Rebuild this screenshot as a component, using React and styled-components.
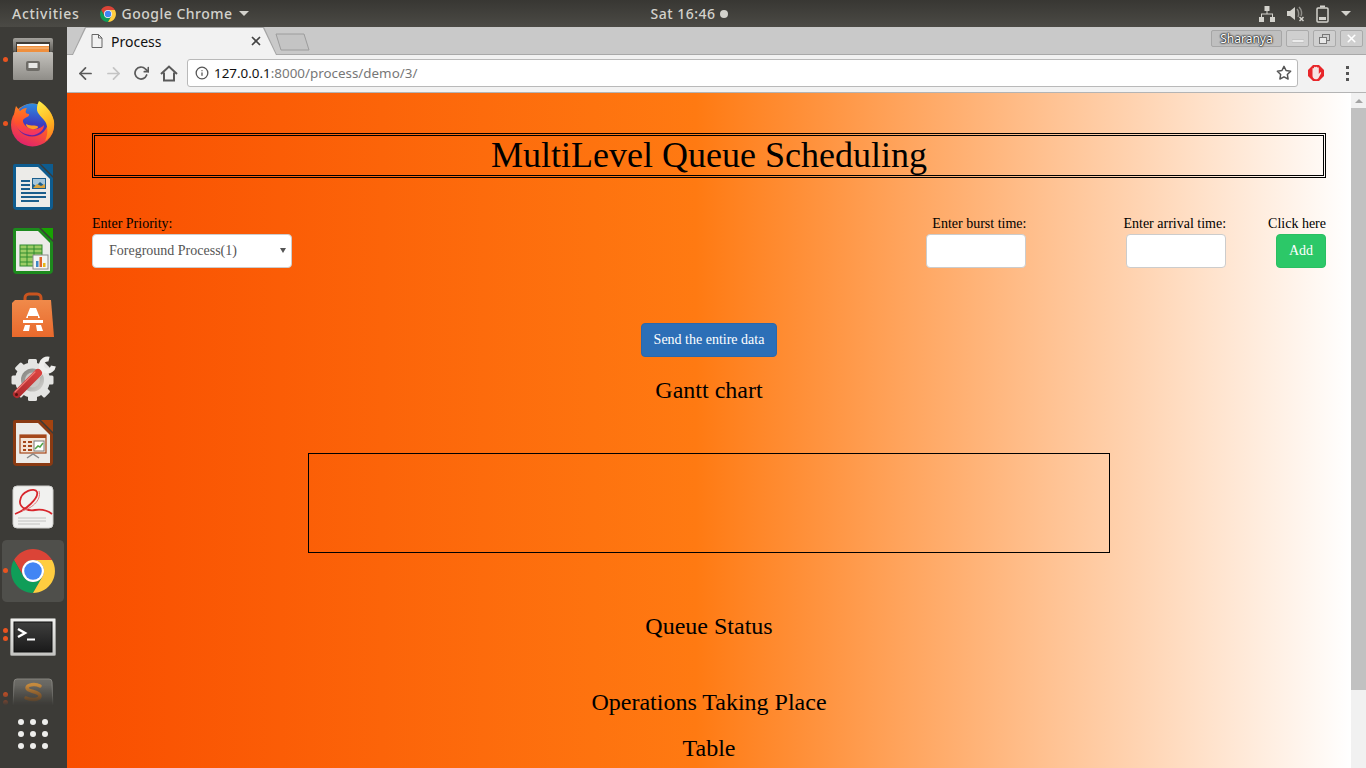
import React from "react";
import styled, { createGlobalStyle } from "styled-components";
import { FiArrowLeft, FiArrowRight, FiRotateCw, FiInfo, FiStar, FiX } from "react-icons/fi";

const GlobalStyle = createGlobalStyle`
  html, body { margin: 0; padding: 0; height: 100%; overflow: hidden; }
  * { box-sizing: border-box; }
`;

const Screen = styled.div`
  width: 1366px;
  height: 768px;
  display: flex;
  flex-direction: column;
  overflow: hidden;
  font-family: "Liberation Serif", serif;
`;

const TopBar = styled.div`
  height: 27px;
  flex: none;
  display: grid;
  grid-template-columns: 1fr auto 1fr;
  align-items: center;
  background: linear-gradient(#383733, #4b4a45);
  color: #d3d2cc;
  font-family: "Noto Sans", sans-serif;
  font-size: 14px;
  font-weight: 500;
  letter-spacing: 0.5px;
`;

const TopLeft = styled.div`
  display: flex;
  align-items: center;
  padding-left: 12px;
`;

const Activities = styled.span`
  letter-spacing: 0.72px;
`;

const AppMenu = styled.div`
  display: flex;
  align-items: center;
  gap: 6px;
  margin-left: 20px;
`;

const Caret = styled.span`
  width: 0;
  height: 0;
  border-left: 5px solid transparent;
  border-right: 5px solid transparent;
  border-top: 5px solid #d3d2cc;
`;

const Clock = styled.div`
  display: flex;
  align-items: center;
  gap: 4px;
  margin-left: 12px;
`;

const ClockDot = styled.span`
  width: 8px;
  height: 8px;
  border-radius: 50%;
  background: #d3d2cc;
`;

const Tray = styled.div`
  display: flex;
  align-items: center;
  justify-content: flex-end;
  gap: 12px;
  padding-right: 15px;
`;

const Body = styled.div`
  flex: 1;
  display: flex;
  min-height: 0;
`;

const Dock = styled.div`
  width: 67px;
  flex: none;
  display: flex;
  flex-direction: column;
  align-items: flex-start;
  padding-left: 2px;
  background: #3c3b37;
`;

const DockItem = styled.div`
  position: relative;
  width: 62px;
  height: 64px;
  flex: none;
  display: flex;
  align-items: center;
  justify-content: center;
  border-top: 1px solid transparent;
  border-bottom: 1px solid transparent;
  background-clip: padding-box;
  border-radius: 5px;
  background-color: ${(p) => (p.$active ? "rgba(255,255,255,0.1)" : "transparent")};
`;

const FadedItem = styled.div`
  position: relative;
  width: 62px;
  height: 42px;
  flex: none;
  display: flex;
  justify-content: center;
  padding-top: 11px;
  overflow: hidden;
  -webkit-mask-image: linear-gradient(#000 45%, rgba(0, 0, 0, 0.55) 70%, transparent 92%);
  mask-image: linear-gradient(#000 45%, rgba(0, 0, 0, 0.55) 70%, transparent 92%);
`;

const RunDot = styled.span`
  position: absolute;
  left: 1px;
  top: ${(p) => p.$top}px;
  width: 5px;
  height: 5px;
  border-radius: 50%;
  background: #e95420;
`;

const AppGrid = styled.div`
  display: grid;
  grid-template-columns: repeat(3, 6px);
  gap: 6px;
  margin: 10px 0 0 16px;
`;

const GridDot = styled.span`
  width: 6px;
  height: 6px;
  border-radius: 50%;
  background: #eeeeec;
`;

const Browser = styled.div`
  flex: 1;
  min-width: 0;
  display: flex;
  flex-direction: column;
`;

const TabStrip = styled.div`
  height: 28px;
  flex: none;
  display: flex;
  align-items: flex-end;
  padding-left: 5px;
  background: #c9c9c9;
  border-bottom: 1px solid #a9a9a9;
`;

const Tab = styled.div`
  position: relative;
  width: 205px;
  height: 28px;
  margin-bottom: -1px;
  background: #a4a4a4;
  clip-path: polygon(0 100%, 13px 0, calc(100% - 13px) 0, 100% 100%);
  &::before {
    content: "";
    position: absolute;
    inset: 1px 1px 0 1px;
    background: #f2f2f2;
    clip-path: polygon(0 100%, 13px 0, calc(100% - 13px) 0, 100% 100%);
  }
`;

const TabInner = styled.div`
  position: relative;
  height: 100%;
  display: flex;
  align-items: center;
  padding: 0 14px 0 19px;
  color: #111;
  font-family: "Noto Sans", sans-serif;
  font-size: 14px;
`;

const TabTitle = styled.span`
  flex: 1;
  margin-left: 8px;
`;

const NewTab = styled.svg`
  margin: 0 0 3px -2px;
  flex: none;
`;

const WindowControls = styled.div`
  margin-left: auto;
  align-self: flex-start;
  display: flex;
  align-items: center;
  gap: 4px;
  padding: 3px 3px 0 0;
`;

const ProfileChip = styled.div`
  width: 71px;
  height: 17px;
  display: flex;
  align-items: center;
  justify-content: center;
  border: 1px solid #a6a6a6;
  border-radius: 2px;
  background: #bfbfbf;
  color: #fff;
  font-family: "Noto Sans", sans-serif;
  font-size: 12px;
  text-shadow: 0 0 1px #111, 0 0 2px #111, 0 0 2px #111;
`;

const WinButton = styled.div`
  width: 23px;
  height: 17px;
  display: flex;
  align-items: center;
  justify-content: center;
  border: 1px solid #aaa;
  border-radius: 2px;
  background: #cfcfcf;
`;

const Toolbar = styled.div`
  height: 38px;
  flex: none;
  display: flex;
  align-items: center;
  padding: 0 0 1px 4px;
  background: #f2f2f2;
  border-bottom: 1px solid #b4b4b4;
  color: #555;
`;

const NavIcon = styled.div`
  width: 28px;
  height: 28px;
  flex: none;
  display: flex;
  align-items: center;
  justify-content: center;
  color: ${(p) => (p.$muted ? "#c4c4c4" : "#5a5a5a")};
`;

const Omnibox = styled.div`
  width: 1111px;
  height: 28px;
  margin-left: 4px;
  flex: none;
  display: flex;
  align-items: center;
  padding: 0 5px 0 7px;
  background: #fff;
  border: 1px solid #b9b9b9;
  border-radius: 3px;
  font-family: "Noto Sans", sans-serif;
  font-size: 13.4px;
  color: #777;
`;

const UrlHost = styled.span`
  color: #111;
  margin-left: 5px;
`;

const UrlRest = styled.span`
  flex: 1;
`;

const ExtButton = styled.div`
  width: 24px;
  height: 24px;
  margin-left: 6px;
  display: flex;
  align-items: center;
  justify-content: center;
`;

const MenuDots = styled.div`
  margin-left: 18px;
  display: flex;
  flex-direction: column;
  gap: 3px;
`;

const MenuDot = styled.span`
  width: 3px;
  height: 3px;
  background: #555;
`;

const Viewport = styled.div`
  flex: 1;
  min-height: 0;
  display: flex;
`;

const Page = styled.div`
  flex: 1;
  min-width: 0;
  padding: 40px 25px 0;
  background: linear-gradient(to right, #f94e00 0%, #ff7a12 49%, #ffffff 100%);
  color: #000;
  text-align: center;
  overflow: hidden;
`;

const Title = styled.h1`
  height: 45px;
  margin: 0;
  border: 3px double #000;
  font-size: 36px;
  font-weight: 400;
  line-height: 38px;
`;

const FormRow = styled.div`
  margin-top: 36px;
  display: flex;
  align-items: flex-end;
  gap: 100px;
  font-size: 14px;
`;

const Field = styled.div`
  display: flex;
  flex-direction: column;
  align-items: ${(p) => (p.$left ? "flex-start" : "flex-end")};
  margin-left: ${(p) => (p.$push ? "auto" : "0")};
  margin-right: ${(p) => p.$pull || 0}px;
`;

const Label = styled.label`
  line-height: 20px;
`;

const SelectWrap = styled.div`
  position: relative;
  width: 200px;
  height: 34px;
  &::after {
    content: "";
    position: absolute;
    right: 6px;
    top: 14px;
    border-left: 3.5px solid transparent;
    border-right: 3.5px solid transparent;
    border-top: 5px solid #555;
    pointer-events: none;
  }
`;

const Select = styled.select`
  width: 100%;
  height: 100%;
  padding: 0 12px 2px 16px;
  appearance: none;
  border: 1px solid #ccc;
  border-radius: 4px;
  background: #fff;
  color: #555;
  font-family: inherit;
  font-size: 14px;
`;

const Input = styled.input`
  width: 100px;
  height: 34px;
  padding: 6px 12px;
  border: 1px solid #ccc;
  border-radius: 4px;
  background: #fff;
  font-size: 14px;
`;

const Button = styled.button`
  height: 34px;
  padding: 6px 12px;
  border: 1px solid ${(p) => p.$border};
  border-radius: 4px;
  background: ${(p) => p.$bg};
  color: #fff;
  font-family: inherit;
  font-size: 14px;
`;

const SendRow = styled.div`
  margin-top: 55px;
`;

const Heading = styled.h3`
  margin: ${(p) => p.$top}px 0 0;
  font-size: 24px;
  font-weight: 400;
  line-height: 26px;
`;

const Gantt = styled.div`
  width: 802px;
  height: 100px;
  margin: 50px auto 0;
  border: 1px solid #000;
`;

const ScrollBar = styled.div`
  width: 15px;
  flex: none;
  display: flex;
  flex-direction: column;
  align-items: stretch;
  background: #f1f1f1;
`;

const ScrollArrow = styled.div`
  height: 15px;
  flex: none;
  display: flex;
  align-items: center;
  justify-content: center;
  &::before {
    content: "";
    border-left: 4px solid transparent;
    border-right: 4px solid transparent;
    border-bottom: 4px solid #a3a3a3;
  }
`;

const ScrollThumb = styled.div`
  height: 582px;
  background: #c1c1c1;
`;

const ChromeLogo = ({ size }) => (
  <svg width={size} height={size} viewBox="2 2 44 44">
    <path fill="#db4437" d="M43 13L24 13A11 11 0 0 0 14.5 29.500L5 13A22 22 0 0 1 43 13Z" />
    <path fill="#0f9d58" d="M5 13L14.5 29.500A11 11 0 0 0 33.5 29.500L24 46A22 22 0 0 1 5 13Z" />
    <path fill="#ffcd40" d="M24 46L33.5 29.500A11 11 0 0 0 24 13L43 13A22 22 0 0 1 24 46Z" />
    <circle cx="24" cy="24" r="11" fill="#fff" />
    <circle cx="24" cy="24" r="8.8" fill="#4285f4" />
  </svg>
);

const FilesIcon = () => (
  <svg width="42" height="44" viewBox="0 0 42 44">
    <defs>
      <linearGradient id="cab" x1="0" y1="0" x2="0" y2="1">
        <stop offset="0" stopColor="#c4c2bd" />
        <stop offset="1" stopColor="#8f8d88" />
      </linearGradient>
      <linearGradient id="cabTop" x1="0" y1="0" x2="0" y2="1">
        <stop offset="0" stopColor="#a3a19c" />
        <stop offset="1" stopColor="#5e5c57" />
      </linearGradient>
    </defs>
    <rect x="1" y="1" width="40" height="14" rx="2" fill="url(#cabTop)" />
    <rect x="4" y="5" width="34" height="10" fill="#3f3b36" />
    <rect x="5" y="7" width="32" height="2" fill="#fff" />
    <rect x="5" y="9" width="32" height="6" fill="#ef8f3d" />
    <rect x="5" y="10.500" width="32" height="1" fill="#f7c38d" />
    <rect x="1" y="15" width="40" height="28" rx="1" fill="url(#cab)" />
    <rect x="14" y="24" width="14" height="10" rx="2" fill="#6e6c67" />
    <rect x="16.500" y="26" width="9" height="5" fill="#e8e8e6" />
  </svg>
);

const FirefoxIcon = () => (
  <svg width="44" height="47" viewBox="0 0 44 47">
    <defs>
      <linearGradient id="ffo" x1="0.75" y1="0" x2="0.3" y2="1">
        <stop offset="0" stopColor="#ffa91f" />
        <stop offset="0.5" stopColor="#ff5a2a" />
        <stop offset="1" stopColor="#e0206f" />
      </linearGradient>
      <linearGradient id="ffh" x1="0.5" y1="0" x2="0.5" y2="1">
        <stop offset="0" stopColor="#ff7f1f" />
        <stop offset="0.6" stopColor="#ff4f2e" />
        <stop offset="1" stopColor="#f0306a" />
      </linearGradient>
      <linearGradient id="ffb" x1="0.6" y1="0" x2="0.5" y2="1">
        <stop offset="0" stopColor="#2f8de0" />
        <stop offset="0.6" stopColor="#3a3fc0" />
        <stop offset="1" stopColor="#6a1f9e" />
      </linearGradient>
      <linearGradient id="ffy" x1="0" y1="0" x2="0.3" y2="1">
        <stop offset="0" stopColor="#fff04a" />
        <stop offset="0.7" stopColor="#ffb21f" />
        <stop offset="1" stopColor="#ff8a1f" />
      </linearGradient>
    </defs>
    <circle cx="21.500" cy="25" r="21.500" fill="url(#ffo)" />
    <circle cx="21" cy="20" r="16.500" fill="url(#ffb)" />
    <path fill="url(#ffh)" d="M5 6L9 11C11 9 13 8 16 8C14 11 14 14 18 14C19 17 14 17 12 20C11 24 17 29 22 29C27 30 31 27 33 25C33 31 26 36 19 35C10 34 3 27 3 18C3 13 4 9 5 6Z" />
    <path fill="#ff9a24" d="M15 24C18 26 23 25 26 26C29 27 25 30 21 29C18 28.500 15 27 15 24Z" />
    <path fill="url(#ffy)" d="M28 1C33 4 41 11 43 21C44 30 41 37 34 41C37 35 37 28 35 23C33 18 25 14 26 8C26 5 27 3 28 1Z" />
  </svg>
);

const DocIcon = ({ dark, fold, children }) => (
  <svg width="42" height="48" viewBox="0 0 42 48">
    <path fill={dark} d="M3 1H27L41 15V43A4 4 0 0 1 37 47H5A4 4 0 0 1 1 43V3A2 2 0 0 1 3 1Z" />
    <path fill="#ecebe8" d="M4 4H26L38 16V44H4Z" />
    <path fill={fold} d="M29 1H41V13Z" />
    {children}
  </svg>
);

const WriterLines = () => (
  <g>
    <rect x="9" y="17" width="9" height="2" fill="#1b5e8c" />
    <rect x="9" y="21" width="9" height="2" fill="#1b5e8c" />
    <rect x="9" y="25" width="9" height="2" fill="#1b5e8c" />
    <rect x="20" y="15" width="14" height="11" fill="#1b5e8c" />
    <path fill="#a4c6dc" d="M21 16H33V23L28 19L24 23L21 21Z" />
    <path fill="#d9a441" d="M21 25L25 21L29 23L33 21V25Z" />
    <rect x="9" y="29" width="25" height="2" fill="#1b5e8c" />
    <rect x="9" y="33" width="25" height="2" fill="#1b5e8c" />
    <rect x="9" y="37" width="18" height="2" fill="#1b5e8c" />
  </g>
);

const CalcSheet = () => (
  <g>
    <rect x="8" y="18" width="22" height="21" fill="#9ccc65" stroke="#2e8b2e" />
    <path stroke="#2e8b2e" fill="none" d="M8 22H30M8 26H30M8 30H30M8 35H30M15 18V39M22 18V39" />
    <rect x="21" y="28" width="15" height="14" fill="#f3f3f1" stroke="#8a8a8a" />
    <rect x="24" y="34" width="2.500" height="6" fill="#3f87c5" />
    <rect x="27.500" y="30" width="2.500" height="10" fill="#e0642a" />
    <rect x="31" y="36" width="2.500" height="4" fill="#e7b416" />
  </g>
);

const StoreIcon = () => (
  <svg width="44" height="46" viewBox="0 0 44 46">
    <defs>
      <linearGradient id="bag" x1="0" y1="0" x2="0" y2="1">
        <stop offset="0" stopColor="#f08a4a" />
        <stop offset="1" stopColor="#e9692c" />
      </linearGradient>
    </defs>
    <path fill="none" stroke="#c9541f" strokeWidth="3" d="M14 12V6A4 4 0 0 1 18 2H26A4 4 0 0 1 30 6V12" />
    <path fill="url(#bag)" d="M4 8H40L43 45H1V11Z" />
    <path fill="#fff" d="M19 16H25L29 26H15ZM12 28H32V31H12ZM14 33H19L18 39H12ZM25 33H30L32 39H26Z" />
    <rect x="17" y="24" width="10" height="2" fill="#ec7a3c" />
  </svg>
);

const gearTeeth = [0, 45, 90, 135, 180, 225, 270, 315];

const ToolsIcon = () => (
  <svg width="46" height="46" viewBox="0 0 46 46">
    <defs>
      <linearGradient id="gearIn" x1="0" y1="0" x2="1" y2="1">
        <stop offset="0" stopColor="#7f7e7a" />
        <stop offset="1" stopColor="#d6d5d2" />
      </linearGradient>
      <linearGradient id="handle" x1="0" y1="1" x2="1" y2="0">
        <stop offset="0" stopColor="#b02a2e" />
        <stop offset="1" stopColor="#d8423f" />
      </linearGradient>
    </defs>
    <circle cx="22.500" cy="24" r="17.500" fill="#e4e4e2" />
    {gearTeeth.map((deg) => (
      <rect key={deg} x="18" y="3" width="9" height="8" rx="1.500" fill="#e4e4e2" transform={`rotate(${deg} 22.500 24)`} />
    ))}
    <circle cx="22.500" cy="24" r="11.500" fill="url(#gearIn)" />
    <circle cx="22.500" cy="24" r="7.500" fill="#c9c8c5" />
    <path fill="none" stroke="#eeeeec" strokeWidth="5" d="M39 3.200A6 6 0 1 0 43.400 10" />
    <path stroke="#eeeeec" strokeWidth="7" d="M27 19L33 13" />
    <path fill="none" stroke="url(#handle)" strokeWidth="8" strokeLinecap="round" d="M7 38L28 17" />
    <path fill="none" stroke="#ec7b76" strokeWidth="1.200" strokeLinecap="round" d="M5 36L25 16" />
    <circle cx="6.500" cy="38.500" r="1.500" fill="#571210" />
  </svg>
);

const ImpressSlide = () => (
  <g>
    <rect x="8" y="16" width="26" height="18" fill="#f3e4d6" stroke="#a5481b" strokeWidth="1.200" />
    <rect x="8" y="16" width="26" height="3" fill="#a5481b" />
    <path stroke="#a5481b" strokeWidth="2" d="M11 23H14M16 23H20M11 27H14M16 27H20M11 31H14M16 31H20" />
    <rect x="22" y="22" width="10" height="10" fill="#fff" stroke="#7a7a7a" />
    <path fill="none" stroke="#52a447" strokeWidth="1.500" d="M23 30L26 27L28 28L31 24" />
    <path fill="none" stroke="#8a8a8a" strokeWidth="1.500" d="M15 39L21 35L27 39" />
  </g>
);

const ReaderIcon = () => (
  <svg width="42" height="44" viewBox="0 0 42 44">
    <rect x="1" y="1" width="40" height="42" rx="4" fill="#f1f1ef" stroke="#cfcfcc" />
    <path fill="none" stroke="#d8262c" strokeWidth="1.800" d="M3 29C14 25 27 13 25 7C23 2 9 6 8 16C7 24 18 26 23 25C30 24 35 25 40 29" />
    <path fill="none" stroke="#e2777a" strokeWidth="1" d="M10 26C18 24 30 16 27 6" />
    <path stroke="#c2c2c0" d="M6 33H34M6 36H34M6 39H28" />
  </svg>
);

const TerminalIcon = () => (
  <svg width="46" height="41" viewBox="0 -3 46 41">
    <defs>
      <linearGradient id="termBg" x1="0" y1="0" x2="0" y2="1">
        <stop offset="0" stopColor="#3f3f3e" />
        <stop offset="1" stopColor="#1a1a1a" />
      </linearGradient>
      <linearGradient id="termFrame" x1="0" y1="0" x2="0" y2="1">
        <stop offset="0" stopColor="#f0f0ee" />
        <stop offset="1" stopColor="#c4c4c1" />
      </linearGradient>
    </defs>
    <rect x="0.500" y="0.500" width="45" height="37" rx="1" fill="url(#termFrame)" stroke="#9c9c99" />
    <rect x="4" y="4" width="38" height="30" fill="url(#termBg)" stroke="#111" />
    <path fill="none" stroke="#fff" strokeWidth="2.500" d="M8 11L15 15L8 19" />
    <rect x="17" y="20.500" width="8" height="2" fill="#fff" />
  </svg>
);

const SublimeIcon = () => (
  <svg width="42" height="31" viewBox="0 0 42 31">
    <defs>
      <linearGradient id="subBody" x1="0" y1="0" x2="0" y2="1">
        <stop offset="0" stopColor="#6e6d68" />
        <stop offset="1" stopColor="#4b4a46" />
      </linearGradient>
      <linearGradient id="subS" x1="0" y1="0" x2="0" y2="1">
        <stop offset="0" stopColor="#c48a3e" />
        <stop offset="1" stopColor="#a8601c" />
      </linearGradient>
    </defs>
    <path fill="url(#subBody)" stroke="#85847f" d="M5 1H37A3 3 0 0 1 40 4L41 31H1L2 4A3 3 0 0 1 5 1Z" />
    <path fill="none" stroke="url(#subS)" strokeWidth="3.500" strokeLinecap="round" d="M28 8C23 5.500 15 6.500 15 10C15 14 28 13 28 18C28 22 19 22.500 14 20" />
  </svg>
);

const ABPIcon = () => (
  <svg width="16" height="16" viewBox="0 0 16 16">
    <path fill="#e8262a" d="M5 0H11L16 5V11L11 16H5L0 11V5Z" />
    <path fill="#f6e4e2" d="M4.500 7V3.500A.8.8 0 0 1 6 3.500V2.500A.8.8 0 0 1 7.600 2.500A.8.8 0 0 1 9.200 2.500V3A.8.8 0 0 1 10.800 3V9L12 7.500C13 7 13.500 7.800 13 8.500L10.500 13C10 14 9 14.200 8 14.200C5.500 14.200 4.500 12.500 4.500 10.500Z" />
  </svg>
);

const HomeGlyph = () => (
  <svg width="18" height="17" viewBox="0 0 18 17" fill="none" stroke="#5a5a5a" strokeWidth="2">
    <path d="M1 9L9 1.500L17 9" />
    <path d="M4 7.500V15.500H14V7.500" />
  </svg>
);

const dockApps = [
  { icon: <FilesIcon />, dots: [29] },
  { icon: <FirefoxIcon />, dots: [29] },
  { icon: <DocIcon dark="#0e5c8f" fold="#0e5c8f"><WriterLines /></DocIcon>, dots: [] },
  { icon: <DocIcon dark="#1d8a1d" fold="#18a303"><CalcSheet /></DocIcon>, dots: [] },
  { icon: <StoreIcon />, dots: [] },
  { icon: <ToolsIcon />, dots: [] },
  { icon: <DocIcon dark="#8a3a12" fold="#a5430f"><ImpressSlide /></DocIcon>, dots: [] },
  { icon: <ReaderIcon />, dots: [] },
  { icon: <ChromeLogo size={44} />, dots: [28], active: true },
  { icon: <TerminalIcon />, dots: [24, 32] },
];

const App = () => {
  return (
    <Screen>
      <GlobalStyle />
      <TopBar>
        <TopLeft>
          <Activities>Activities</Activities>
          <AppMenu>
            <ChromeLogo size={16} />
            Google Chrome
            <Caret />
          </AppMenu>
        </TopLeft>
        <Clock>
          Sat 16:46
          <ClockDot />
        </Clock>
        <Tray>
          <svg width="16" height="16" viewBox="0 0 16 16" fill="#d3d2cc">
            <rect x="5.500" y="0" width="5" height="5" />
            <rect x="0" y="11" width="5" height="5" />
            <rect x="11" y="11" width="5" height="5" />
            <path d="M7.500 5H8.500V7.500H14V11H13V8.500H3V11H2V7.500H7.500Z" />
          </svg>
          <svg width="17" height="16" viewBox="0 0 17 16" fill="#d3d2cc">
            <path d="M0 5H3L8 1V14L3 10H0Z" />
            <path d="M10 3C12 5 12 9 11 11" fill="none" stroke="#8f8e89" strokeWidth="1.500" />
            <path d="M12 1C15 4 15 8 14 10" fill="none" stroke="#8f8e89" strokeWidth="1.500" />
            <path d="M12.500 11L16.500 15M16.500 11L12.500 15" stroke="#d3d2cc" strokeWidth="1.500" />
          </svg>
          <svg width="13" height="18" viewBox="0 0 13 18" fill="none">
            <rect x="1" y="3" width="11" height="14" rx="1" stroke="#d3d2cc" strokeWidth="1.500" />
            <rect x="4" y="0.500" width="5" height="2" fill="#d3d2cc" />
            <rect x="3" y="12" width="7" height="3" fill="#d3d2cc" />
          </svg>
          <Caret />
        </Tray>
      </TopBar>
      <Body>
        <Dock>
          {dockApps.map((app, i) => (
            <DockItem key={i} $active={app.active}>
              {app.icon}
              {app.dots.map((top) => (
                <RunDot key={top} $top={top} />
              ))}
            </DockItem>
          ))}
          <FadedItem>
            <SublimeIcon />
            <RunDot $top={25} />
            <RunDot $top={33} />
          </FadedItem>
          <AppGrid>
            {Array.from({ length: 9 }).map((_, i) => (
              <GridDot key={i} />
            ))}
          </AppGrid>
        </Dock>
        <Browser>
          <TabStrip>
            <Tab>
              <TabInner>
                <svg width="12" height="14" viewBox="0 0 12 14" fill="none" stroke="#666">
                  <path d="M1 .5H7.500L11 4V13.500H1ZM7.500 .5V4H11" />
                </svg>
                <TabTitle>Process</TabTitle>
                <FiX size={14} color="#444" strokeWidth={3} />
              </TabInner>
            </Tab>
            <NewTab width="36" height="18" viewBox="0 0 36 18">
              <path d="M1 1H29L34 17H6Z" fill="#c4c4c4" stroke="#9c9c9c" />
            </NewTab>
            <WindowControls>
              <ProfileChip>Sharanya</ProfileChip>
              <WinButton>
                <svg width="12" height="10" viewBox="0 0 12 10"><rect y="6" width="12" height="2" fill="#fff" stroke="#999" strokeWidth=".4" /></svg>
              </WinButton>
              <WinButton>
                <svg width="11" height="10" viewBox="0 0 11 10" fill="none" stroke="#777"><rect x="3.500" y=".5" width="7" height="6" /><rect x=".5" y="3.500" width="7" height="6" fill="#e8e8e8" /></svg>
              </WinButton>
              <WinButton>
                <FiX size={13} color="#fff" strokeWidth={3} />
              </WinButton>
            </WindowControls>
          </TabStrip>
          <Toolbar>
            <NavIcon><FiArrowLeft size={19} strokeWidth={2.200} /></NavIcon>
            <NavIcon $muted><FiArrowRight size={19} strokeWidth={2.200} /></NavIcon>
            <NavIcon><FiRotateCw size={16} strokeWidth={2.600} /></NavIcon>
            <NavIcon><HomeGlyph /></NavIcon>
            <Omnibox>
              <FiInfo size={14} color="#555" strokeWidth={2.200} />
              <UrlHost>127.0.0.1</UrlHost>
              <UrlRest>:8000/process/demo/3/</UrlRest>
              <FiStar size={16} color="#555" strokeWidth={2.200} />
            </Omnibox>
            <ExtButton><ABPIcon /></ExtButton>
            <MenuDots><MenuDot /><MenuDot /><MenuDot /></MenuDots>
          </Toolbar>
          <Viewport>
            <Page>
              <Title>MultiLevel Queue Scheduling</Title>
              <FormRow>
                <Field $left>
                  <Label>Enter Priority:</Label>
                  <SelectWrap>
                    <Select defaultValue="1">
                      <option value="1">Foreground Process(1)</option>
                      <option value="2">Background Process(2)</option>
                    </Select>
                  </SelectWrap>
                </Field>
                <Field $push $pull={-3}>
                  <Label>Enter burst time:</Label>
                  <Input type="text" />
                </Field>
                <Field $pull={-58}>
                  <Label>Enter arrival time:</Label>
                  <Input type="text" />
                </Field>
                <Field>
                  <Label>Click here</Label>
                  <Button $bg="#2cc868" $border="#2abf62">Add</Button>
                </Field>
              </FormRow>
              <SendRow>
                <Button $bg="#2c6fb7" $border="#2a68ab">Send the entire data</Button>
              </SendRow>
              <Heading $top={20}>Gantt chart</Heading>
              <Gantt />
              <Heading $top={60}>Queue Status</Heading>
              <Heading $top={50}>Operations Taking Place</Heading>
              <Heading $top={20}>Table</Heading>
            </Page>
            <ScrollBar>
              <ScrollArrow />
              <ScrollThumb />
            </ScrollBar>
          </Viewport>
        </Browser>
      </Body>
    </Screen>
  );
};

export default App;
